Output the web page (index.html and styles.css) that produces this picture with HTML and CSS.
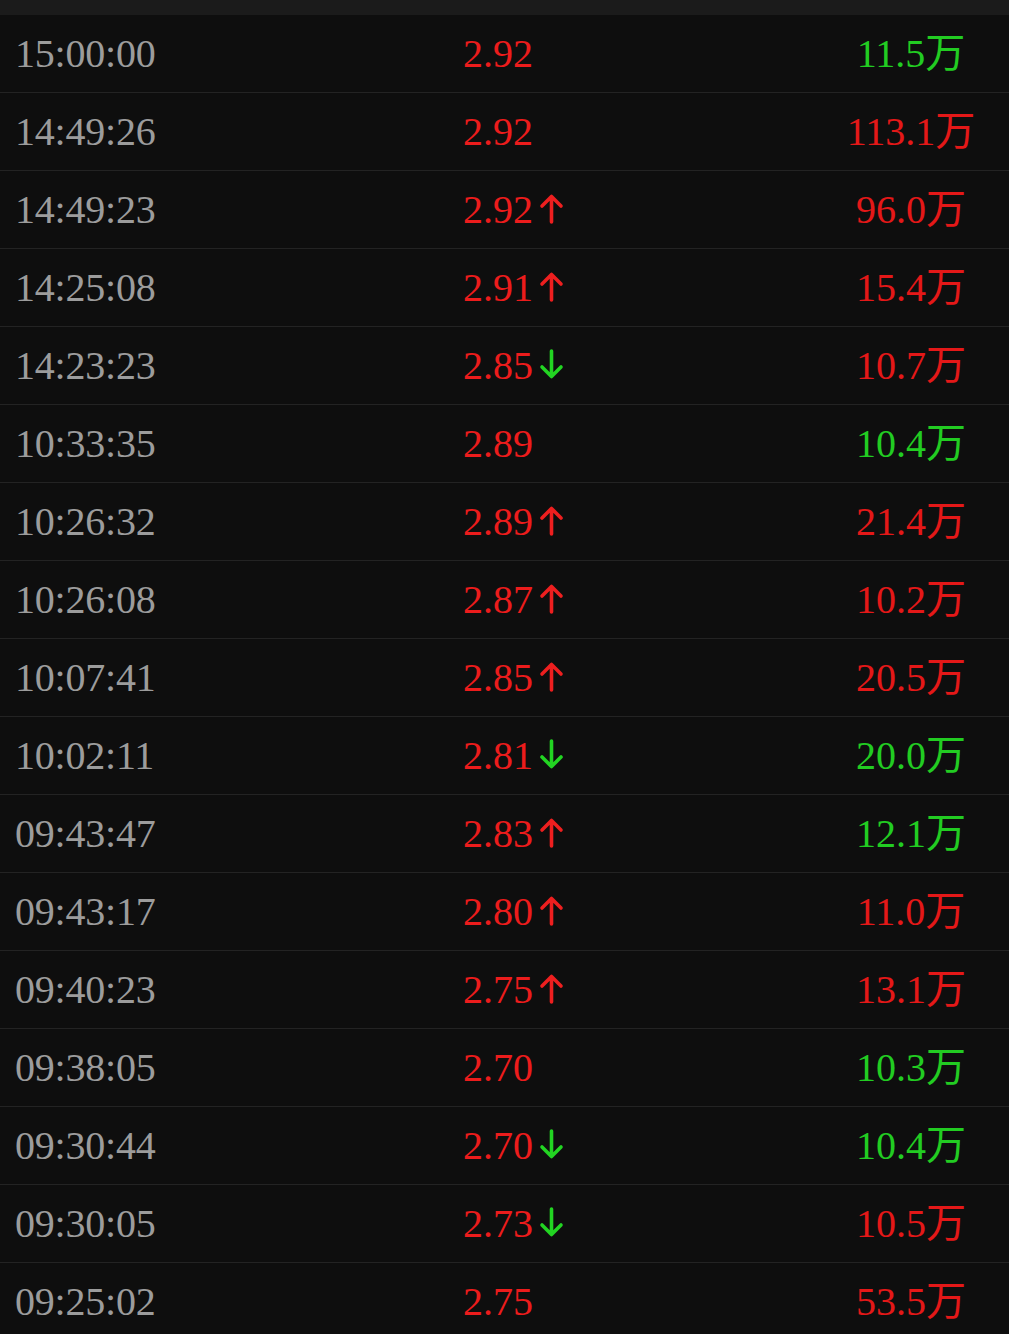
FILE: index.html
```html
<!DOCTYPE html>
<html lang="zh-CN">
<head>
    <meta charset="UTF-8">
    <meta name="viewport" content="width=device-width, initial-scale=1.0">
    <title>成交明细</title>
    <link rel="stylesheet" href="styles.css">
</head>
<body>
    <div class="topbar"></div>
    <div class="ticks" id="ticks"></div>
    <svg width="0" height="0" class="defs">
        <defs>
            <symbol id="arrow-up" viewBox="0 0 25 31">
                <path d="M12.5 4 V29 M3 13 L12.5 3.5 L22 13" fill="none" stroke="currentColor" stroke-width="3.6" stroke-linecap="round" stroke-linejoin="round"/>
            </symbol>
            <symbol id="arrow-down" viewBox="0 0 25 31">
                <path d="M12.5 2 V27 M3 18 L12.5 27.5 L22 18" fill="none" stroke="currentColor" stroke-width="3.6" stroke-linecap="round" stroke-linejoin="round"/>
            </symbol>
        </defs>
    </svg>
    <script>
        // time, price, direction (up/down/none), volume, volume colour
        const ticks = [
            ["15:00:00", "2.92", "", "11.5万", "green"],
            ["14:49:26", "2.92", "", "113.1万", "red"],
            ["14:49:23", "2.92", "up", "96.0万", "red"],
            ["14:25:08", "2.91", "up", "15.4万", "red"],
            ["14:23:23", "2.85", "down", "10.7万", "red"],
            ["10:33:35", "2.89", "", "10.4万", "green"],
            ["10:26:32", "2.89", "up", "21.4万", "red"],
            ["10:26:08", "2.87", "up", "10.2万", "red"],
            ["10:07:41", "2.85", "up", "20.5万", "red"],
            ["10:02:11", "2.81", "down", "20.0万", "green"],
            ["09:43:47", "2.83", "up", "12.1万", "green"],
            ["09:43:17", "2.80", "up", "11.0万", "red"],
            ["09:40:23", "2.75", "up", "13.1万", "red"],
            ["09:38:05", "2.70", "", "10.3万", "green"],
            ["09:30:44", "2.70", "down", "10.4万", "green"],
            ["09:30:05", "2.73", "down", "10.5万", "red"],
            ["09:25:02", "2.75", "", "53.5万", "red"]
        ];

        const list = document.getElementById("ticks");

        ticks.forEach(([time, price, dir, vol, volColor]) => {
            const row = document.createElement("div");
            row.className = "tick";

            let arrow = "";
            if (dir) {
                arrow = `<svg class="arrow ${dir}"><use href="#arrow-${dir}"></use></svg>`;
            }

            row.innerHTML = `
                <span class="time">${time}</span>
                <span class="price">${price}${arrow}</span>
                <span class="volume ${volColor}">${vol}</span>`;
            list.appendChild(row);
        });
    </script>
</body>
</html>
```

FILE: styles.css
```css
body {
    margin: 0;
    background-color: #0e0e0e;
    font-family: "Liberation Serif", "Noto Sans CJK SC", serif;
    overflow: hidden;
}

.defs {
    position: absolute;
}

.topbar {
    height: 15px;
    background-color: #1b1b1b;
}

.tick {
    display: grid;
    grid-template-columns: 463px 1fr 200px;
    align-items: center;
    height: 77px;
    border-bottom: 1px solid #232323;
    font-size: 40px;
    line-height: 40px;
}

.time {
    padding-left: 15px;
    color: #9c9c9c;
    letter-spacing: -0.2px;
}

.price {
    display: flex;
    align-items: center;
    color: #ec1c1c;
}

.arrow {
    width: 25px;
    height: 31px;
    margin-left: 6px;
    margin-top: -2px;
}

.arrow.up {
    color: #ee1f1f;
}

.arrow.down {
    color: #22d422;
}

.volume {
    text-align: center;
    padding-left: 4px;
}

.volume.red {
    color: #e41818;
}

.volume.green {
    color: #22cc22;
}
```
